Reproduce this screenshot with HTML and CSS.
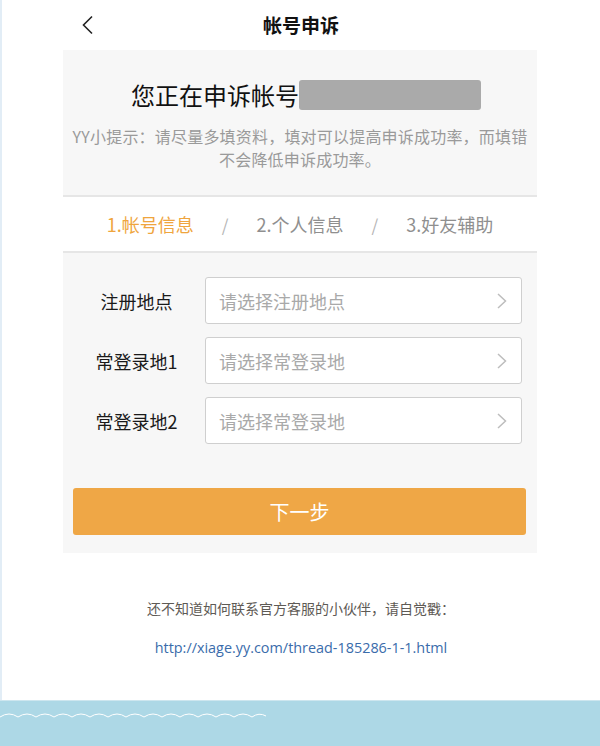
FILE: index.html
```html
<!DOCTYPE html>
<html lang="zh">
<head>
<meta charset="utf-8">
<title>帐号申诉</title>
<link rel="stylesheet" href="styles.css">
</head>
<body>
<div class="page">
  <header class="topbar">
    <div class="back">
      <svg width="14" height="20" viewBox="0 0 14 20"><path d="M11 1.5 L2.5 10 L11 18.5" fill="none" stroke="#222" stroke-width="1.6"/></svg>
    </div>
    <h1 class="topbar-title">帐号申诉</h1>
    <div></div>
  </header>

  <main class="card">
    <section class="intro">
      <div class="intro-title">您正在申诉帐号<span class="redact"></span></div>
      <p class="hint">YY小提示：请尽量多填资料，填对可以提高申诉成功率，而填错<br>不会降低申诉成功率。</p>
    </section>

    <nav class="steps">
      <span class="step active">1.帐号信息</span>
      <span class="sep">/</span>
      <span class="step">2.个人信息</span>
      <span class="sep">/</span>
      <span class="step">3.好友辅助</span>
    </nav>

    <section class="form">
      <div class="row">
        <span class="label">注册地点</span>
        <div class="select"><span>请选择注册地点</span>
          <svg width="12" height="18" viewBox="0 0 12 18"><path d="M2 2 L9.5 9 L2 16" fill="none" stroke="#bdbdbd" stroke-width="1.5"/></svg>
        </div>
      </div>
      <div class="row">
        <span class="label">常登录地1</span>
        <div class="select"><span>请选择常登录地</span>
          <svg width="12" height="18" viewBox="0 0 12 18"><path d="M2 2 L9.5 9 L2 16" fill="none" stroke="#bdbdbd" stroke-width="1.5"/></svg>
        </div>
      </div>
      <div class="row">
        <span class="label">常登录地2</span>
        <div class="select"><span>请选择常登录地</span>
          <svg width="12" height="18" viewBox="0 0 12 18"><path d="M2 2 L9.5 9 L2 16" fill="none" stroke="#bdbdbd" stroke-width="1.5"/></svg>
        </div>
      </div>
      <button class="next">下一步</button>
    </section>
  </main>

  <footer class="help">
    <p class="help-text">还不知道如何联系官方客服的小伙伴，请自觉戳：</p>
    <p class="help-link">http://xiage.yy.com/thread-185286-1-1.html</p>
  </footer>
</div>
<div class="band">
  <svg class="wave" width="266" height="6" viewBox="0 0 266 6">
    <path d="M0 5 Q9 -1 18 5 Q27 -1 36 5 Q45 -1 54 5 Q63 -1 72 5 Q81 -1 90 5 Q99 -1 108 5 Q117 -1 126 5 Q135 -1 144 5 Q153 -1 162 5 Q171 -1 180 5 Q189 -1 198 5 Q207 -1 216 5 Q225 -1 234 5 Q243 -1 252 5 Q259 0 266 4" fill="none" stroke="#ffffff" stroke-width="1"/>
  </svg>
</div>
</body>
</html>
```

FILE: styles.css
```css
* { box-sizing: border-box; }
html, body { margin: 0; padding: 0; background: #fff; }
body {
  font-family: "Noto Sans CJK SC", "Noto Sans", sans-serif;
  color: #222;
}
.page {
  height: 700px;
  border-left: 2px solid #e2edf6;
  display: flex;
  flex-direction: column;
}
.topbar {
  height: 50px;
  display: grid;
  grid-template-columns: 1fr auto 1fr;
  align-items: center;
}
.back { padding-left: 79px; display: flex; align-items: center; }
.back svg { display: block; }
.topbar-title {
  margin: 0;
  font-size: 19px;
  font-weight: 700;
  color: #111;
  line-height: 24px;
}
.card {
  width: 474px;
  margin-left: 61px;
  background: #f7f7f7;
}
.intro {
  padding: 30px 0 24px;
  text-align: center;
  border-bottom: 2px solid #e6e6e6;
}
.intro-title {
  font-size: 24px;
  line-height: 30px;
  color: #111;
  display: flex;
  justify-content: center;
  padding-left: 12px;
}
.redact {
  display: inline-block;
  width: 182px;
  height: 30px;
  background: #aaaaaa;
  border-radius: 3px;
}
.hint {
  margin: 15px 0 0;
  font-size: 16px;
  letter-spacing: 0.2px;
  line-height: 23px;
  color: #9a9a9a;
}
.steps {
  height: 56px;
  background: #fff;
  border-bottom: 2px solid #e6e6e6;
  display: flex;
  align-items: center;
  justify-content: center;
  gap: 28px;
  font-size: 18px;
  color: #8f8f8f;
  padding-left: 0;
}
.step.active { color: #efa53e; }
.sep { color: #b5b5b5; font-size: 17px; }
.form {
  padding: 24px 15px 18px 10px;
  display: flex;
  flex-direction: column;
  gap: 13px;
}
.row {
  display: flex;
  align-items: center;
  height: 47px;
}
.label {
  width: 127px;
  text-align: center;
  font-size: 18px;
  color: #1a1a1a;
  margin-right: 5px;
}
.select {
  flex: 1;
  height: 47px;
  background: #fff;
  border: 1px solid #cfcfcf;
  border-radius: 3px;
  display: flex;
  align-items: center;
  justify-content: space-between;
  padding: 0 13px 0 13px;
  font-size: 18px;
  color: #a9a9a9;
}
.select svg { display: block; }
.next {
  margin: 31px -4px 0 0;
  height: 47px;
  border: 0;
  border-radius: 3px;
  background: #efa746;
  color: #fff;
  font-family: "Noto Sans CJK SC", "Noto Sans", sans-serif;
  font-size: 20px;
  cursor: pointer;
}
.help {
  text-align: center;
  padding-top: 45px;
}
.help-text {
  margin: 0;
  font-size: 14px;
  line-height: 20px;
  color: #5e5a55;
}
.help-link {
  margin: 20px 0 0;
  font-family: "Open Sans", "Liberation Sans", sans-serif;
  font-size: 14.4px;
  line-height: 20px;
  color: #3a6cab;
}
.band {
  height: 46px;
  background: #add8e6;
  border-top: 1px solid #cde6ef;
  padding-top: 11px;
}
.wave { display: block; }
```
